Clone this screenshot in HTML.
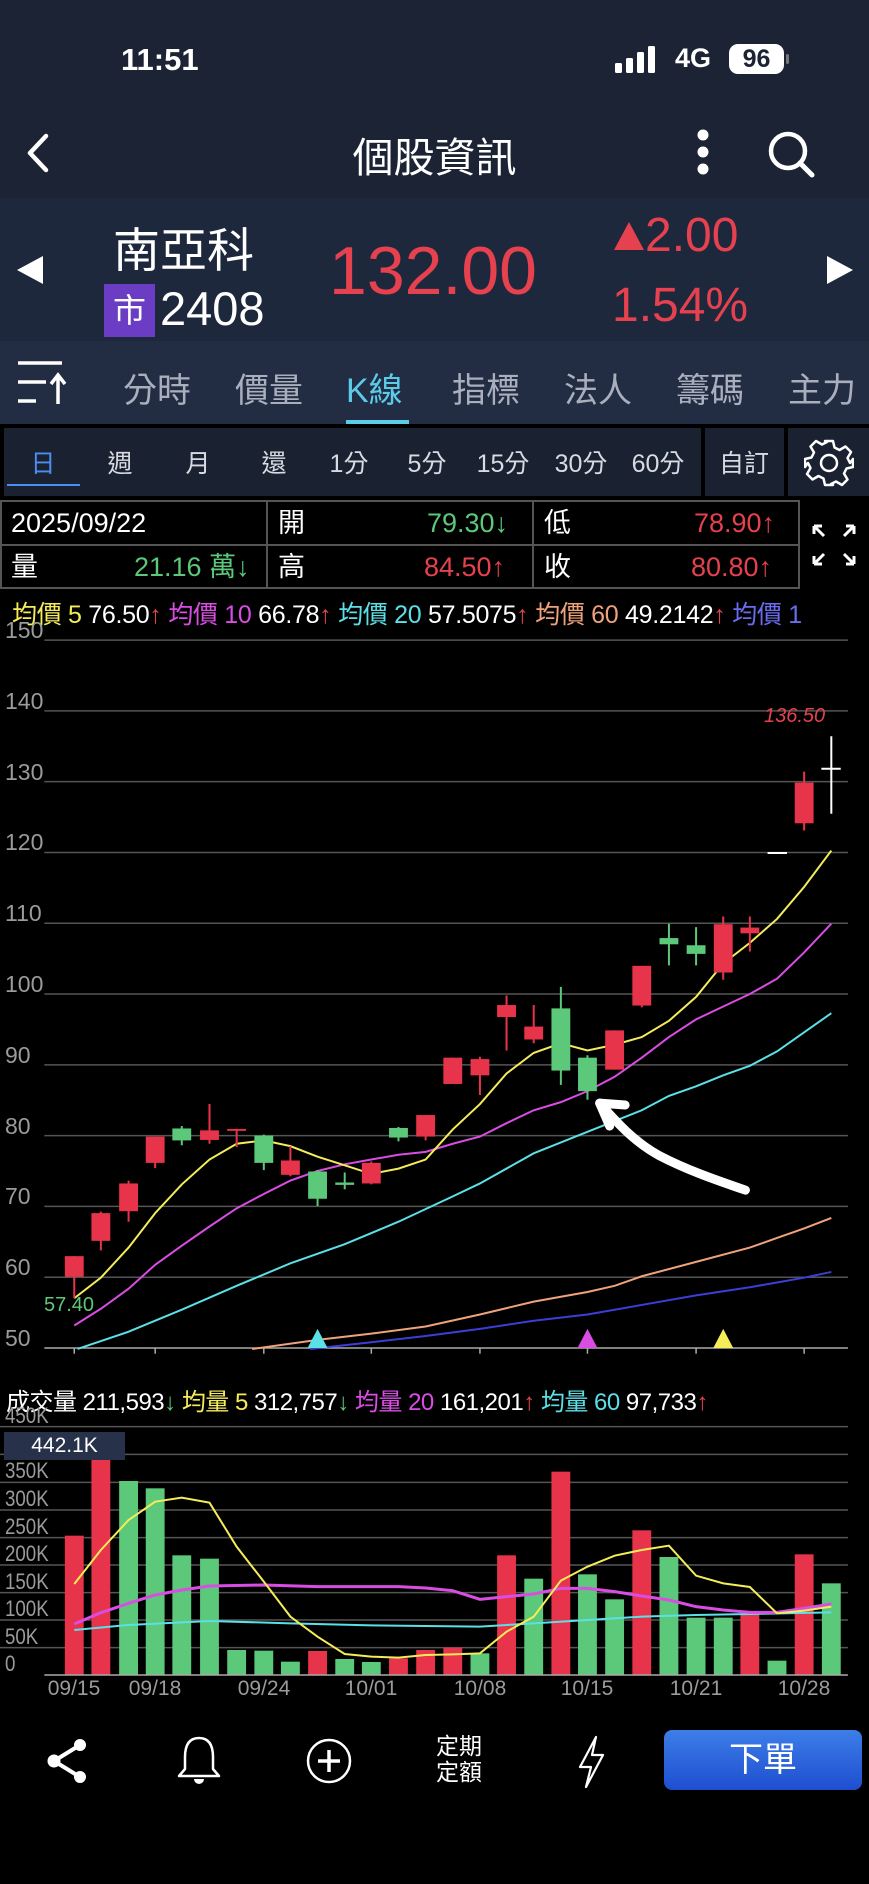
<!DOCTYPE html>
<html><head><meta charset="utf-8"><style>
*{margin:0;padding:0;box-sizing:border-box}
body{width:869px;height:1884px;background:#000;position:relative;overflow:hidden;font-family:"Liberation Sans","Noto Sans CJK TC",sans-serif;color:#fff}
.a{position:absolute;white-space:nowrap}
.tab{position:absolute;top:363px;font-size:34px;color:#a9afbc}
.per{position:absolute;top:444px;font-size:25px;color:#d8dbe2;transform:translateX(-50%)}
.pl{position:absolute;left:5px;font-size:23px;color:#9b9b9b;line-height:24px}
.vl{position:absolute;left:5px;font-size:22px;color:#9b9b9b;line-height:22px;transform:scaleX(.85);transform-origin:left}
.dt{position:absolute;top:1677px;font-size:21px;color:#9b9b9b;transform:translateX(-50%)}
.cell{position:absolute;font-size:27px;line-height:30px}
</style></head><body>
<div class="a" style="left:0;top:0;width:869px;height:198px;background:#1b2335"></div>
<div class="a" style="left:0;top:198px;width:869px;height:143px;background:#1e283c"></div>
<div class="a" style="left:0;top:341px;width:869px;height:83px;background:#222d44"></div>
<div class="a" style="left:121px;top:42px;font-size:31px;font-weight:600">11:51</div>
<svg class="a" style="left:615px;top:46px" width="48" height="28"><rect x="0" y="17" width="7" height="10" rx="1.5" fill="#fff"/><rect x="11" y="12" width="7" height="15" rx="1.5" fill="#fff"/><rect x="22" y="6" width="7" height="21" rx="1.5" fill="#fff"/><rect x="33" y="0" width="7" height="27" rx="1.5" fill="#fff"/></svg>
<div class="a" style="left:675px;top:43px;font-size:27px;font-weight:bold">4G</div>
<div class="a" style="left:729px;top:44px;width:55px;height:30px;background:#fff;border-radius:9px;color:#1b2335;font-size:25px;font-weight:bold;text-align:center;line-height:30px">96</div>
<div class="a" style="left:786px;top:54px;width:3px;height:10px;background:#777;border-radius:2px"></div>
<svg class="a" style="left:24px;top:133px" width="30" height="40"><path d="M22 3 L6 20 L22 37" stroke="#fff" stroke-width="4.5" fill="none" stroke-linecap="round" stroke-linejoin="round"/></svg>
<div class="a" style="left:0;width:869px;top:124px;text-align:center;font-size:41px">個股資訊</div>
<svg class="a" style="left:692px;top:128px" width="22" height="50"><circle cx="11" cy="7" r="5.5" fill="#fff"/><circle cx="11" cy="24" r="5.5" fill="#fff"/><circle cx="11" cy="41" r="5.5" fill="#fff"/></svg>
<svg class="a" style="left:766px;top:130px" width="52" height="50"><circle cx="22" cy="21" r="17" stroke="#fff" stroke-width="4.5" fill="none"/><path d="M34 33 L46 45" stroke="#fff" stroke-width="5" stroke-linecap="round"/></svg>
<svg class="a" style="left:15px;top:256px" width="30" height="28"><path d="M28 0 L28 28 L2 14Z" fill="#fff"/></svg>
<svg class="a" style="left:825px;top:256px" width="30" height="28"><path d="M2 0 L2 28 L28 14Z" fill="#fff"/></svg>
<div class="a" style="left:113px;top:212px;font-size:47px">南亞科</div>
<div class="a" style="left:104px;top:284px;width:51px;height:53px;background:#6a3dc4;font-size:33px;text-align:center;line-height:53px">市</div>
<div class="a" style="left:160px;top:281px;font-size:47px">2408</div>
<div class="a" style="left:329px;top:232px;font-size:68px;color:#e5414f">132.00</div>
<svg class="a" style="left:613px;top:221px" width="32" height="30"><path d="M16 1 L31 29 L1 29Z" fill="#e5414f"/></svg>
<div class="a" style="left:645px;top:208px;font-size:48px;color:#e5414f">2.00</div>
<div class="a" style="left:612px;top:278px;font-size:48px;color:#e5414f">1.54%</div>
<svg class="a" style="left:16px;top:360px" width="52" height="46"><path d="M2 3 H46 M2 22 H30 M2 41 H20" stroke="#fff" stroke-width="3.5"/><path d="M42 44 V16 M35 24 L42 15 L49 24" stroke="#fff" stroke-width="3.5" fill="none"/></svg>
<div class="tab" style="left:123px">分時</div>
<div class="tab" style="left:235px">價量</div>
<div class="tab" style="left:346px;color:#5ccbe8">K線</div>
<div class="tab" style="left:452px">指標</div>
<div class="tab" style="left:564px">法人</div>
<div class="tab" style="left:676px">籌碼</div>
<div class="tab" style="left:788px">主力</div>
<div class="a" style="left:346px;top:420px;width:63px;height:4px;background:#5ccbe8"></div>
<div class="a" style="left:4px;top:428px;width:697px;height:68px;background:#1a2130"></div>
<div class="a" style="left:705px;top:428px;width:79px;height:68px;background:#1a2130"></div>
<div class="a" style="left:788px;top:428px;width:81px;height:68px;background:#1a2130"></div>
<div class="per" style="left:43px;color:#4a8ff0">日</div>
<div class="per" style="left:120px">週</div>
<div class="per" style="left:198px">月</div>
<div class="per" style="left:274px">還</div>
<div class="per" style="left:349px">1分</div>
<div class="per" style="left:427px">5分</div>
<div class="per" style="left:503px">15分</div>
<div class="per" style="left:581px">30分</div>
<div class="per" style="left:658px">60分</div>
<div class="per" style="left:744px">自訂</div>
<div class="a" style="left:7px;top:484px;width:73px;height:2px;background:#4a8ff0"></div>
<svg class="a" style="left:804px;top:438px" width="50" height="50" viewBox="0 0 50 50"><path d="M21 3h8l1.5 6.5 5 2.5 6-3.5 5.5 5.5-3.5 6 2.5 5L49 21v8l-6.5 1.5-2.5 5 3.5 6-5.5 5.5-6-3.5-5 2.5L29 47h-8l-1.5-6.5-5-2.5-6 3.5-5.5-5.5 3.5-6-2.5-5L1 29v-8l6.5-1.5 2.5-5-3.5-6 5.5-5.5 6 3.5 5-2.5z" fill="none" stroke="#fff" stroke-width="2.5" stroke-linejoin="round"/><circle cx="25" cy="25" r="8" fill="none" stroke="#fff" stroke-width="2.5"/></svg>
<svg class="a" style="left:0;top:500px" width="869" height="90"><g stroke="#555" stroke-width="2" fill="none"><rect x="1" y="1" width="798" height="87"/><path d="M1 45 H799 M267 1 V88 M533 1 V88"/></g></svg>
<div class="cell" style="left:11px;top:508px">2025/09/22</div>
<div class="cell" style="left:278px;top:508px">開</div>
<div class="cell" style="left:427px;top:508px;color:#5cc87a">79.30↓</div>
<div class="cell" style="left:544px;top:508px">低</div>
<div class="cell" style="left:694px;top:508px;color:#e5414f">78.90↑</div>
<div class="cell" style="left:11px;top:552px">量</div>
<div class="cell" style="left:134px;top:552px;color:#5cc87a">21.16 萬↓</div>
<div class="cell" style="left:278px;top:552px">高</div>
<div class="cell" style="left:424px;top:552px;color:#e5414f">84.50↑</div>
<div class="cell" style="left:544px;top:552px">收</div>
<div class="cell" style="left:691px;top:552px;color:#e5414f">80.80↑</div>
<svg class="a" style="left:810px;top:522px" width="48" height="46"><g stroke="#fff" stroke-width="3" fill="none"><path d="M4 4 L14 14 M4 4 H12 M4 4 V12"/><path d="M44 4 L34 14 M44 4 H36 M44 4 V12"/><path d="M4 42 L14 32 M4 42 H12 M4 42 V34"/><path d="M44 42 L34 32 M44 42 H36 M44 42 V34"/></g></svg>
<div class="a" style="left:12px;top:595px;font-size:25px;letter-spacing:-0.3px"><span style="color:#f5ec5a">均價 5</span> 76.50<span style="color:#e5414f">↑</span> <span style="color:#d94de3">均價 10</span> 66.78<span style="color:#e5414f">↑</span> <span style="color:#5be0e8">均價 20</span> 57.5075<span style="color:#e5414f">↑</span> <span style="color:#f0a27a">均價 60</span> 49.2142<span style="color:#e5414f">↑</span> <span style="color:#6a6cf0">均價 1</span></div>
<div class="pl" style="top:618px">150</div><div class="pl" style="top:689px">140</div><div class="pl" style="top:760px">130</div><div class="pl" style="top:830px">120</div><div class="pl" style="top:901px">110</div><div class="pl" style="top:972px">100</div><div class="pl" style="top:1043px">90</div><div class="pl" style="top:1114px">80</div><div class="pl" style="top:1184px">70</div><div class="pl" style="top:1255px">60</div><div class="pl" style="top:1326px">50</div>
<svg class="a" style="left:0;top:620px" width="869" height="750" viewBox="0 0 1568 1568" preserveAspectRatio="none">
<g stroke="#555" stroke-width="1.5">
<path d="M80 42H1530M80 190H1530M80 338H1530M80 486H1530M80 634H1530M80 782H1530M80 930H1530M80 1078H1530M80 1226H1530M80 1374H1530" vector-effect="non-scaling-stroke"/>
<path d="M80 1522H1530" stroke="#aaa" vector-effect="non-scaling-stroke"/>
<path d="M134 1522V1534M280 1522V1534M476 1522V1534M670 1522V1534M866 1522V1534M1060 1522V1534M1256 1522V1534M1451 1522V1534" stroke="#aaa" vector-effect="non-scaling-stroke"/>
</g>
<g stroke-width="2" fill="none">
<polyline vector-effect="non-scaling-stroke" stroke="#3d3dd8" points="560,1524 670,1510 768,1497 866,1482 963,1465 1060,1452 1158,1432 1256,1412 1353,1395 1402,1385 1451,1375 1500,1363"/>
<polyline vector-effect="non-scaling-stroke" stroke="#f0a27a" points="455,1524 573,1505 670,1492 768,1477 866,1452 963,1425 1060,1405 1109,1392 1158,1372 1256,1342 1353,1312 1402,1292 1451,1272 1500,1250"/>
<polyline vector-effect="non-scaling-stroke" stroke="#5be0e8" points="140,1524 232,1488 328,1442 427,1392 524,1345 622,1305 719,1258 817,1205 866,1178 963,1115 1060,1070 1158,1025 1207,995 1256,975 1305,952 1353,932 1402,902 1451,862 1500,822"/>
<polyline vector-effect="non-scaling-stroke" stroke="#d94de3" points="134,1475 182,1440 232,1398 280,1348 328,1308 378,1268 427,1230 476,1200 524,1172 573,1152 622,1138 670,1128 719,1118 768,1112 817,1095 866,1080 914,1052 963,1025 1012,1008 1060,985 1109,955 1158,915 1207,872 1256,835 1305,808 1353,782 1402,750 1451,695 1500,635"/>
<polyline vector-effect="non-scaling-stroke" stroke="#f5ec5a" points="134,1418 182,1375 232,1312 280,1240 328,1180 378,1128 427,1095 476,1088 524,1100 573,1122 622,1140 670,1158 719,1147 768,1128 817,1065 866,1012 914,948 963,905 1012,885 1060,900 1109,888 1158,872 1207,838 1256,788 1305,718 1353,675 1402,625 1451,558 1500,482"/>
</g>
<g stroke="#e8344a" stroke-width="2">
<path vector-effect="non-scaling-stroke" d="M134 1330V1418M182 1237V1318M232 1172V1258M280 1080V1146M378 1012V1095M427 1064V1102M524 1100V1163M670 1132V1180M768 1035V1088M817 915V970M866 913V993M914 785V900M963 805V885M1109 858V940M1158 723V810M1305 620V752M1353 620V693M1451 317V440"/>
</g>
<g fill="#e8344a">
<rect x="117" y="1330" width="34" height="43"/><rect x="165" y="1240" width="34" height="58"/><rect x="215" y="1178" width="34" height="58"/><rect x="263" y="1080" width="34" height="55"/><rect x="361" y="1067" width="34" height="20"/><rect x="410" y="1064" width="34" height="4"/><rect x="507" y="1130" width="34" height="30"/><rect x="653" y="1135" width="34" height="43"/><rect x="751" y="1035" width="34" height="45"/><rect x="800" y="915" width="34" height="55"/><rect x="849" y="918" width="34" height="34"/><rect x="897" y="805" width="34" height="25"/><rect x="946" y="850" width="34" height="27"/><rect x="1092" y="858" width="34" height="82"/><rect x="1141" y="723" width="34" height="83"/><rect x="1288" y="636" width="34" height="101"/><rect x="1336" y="643" width="34" height="12"/><rect x="1434" y="340" width="34" height="85"/>
</g>
<g stroke="#5cc87a" stroke-width="2">
<path vector-effect="non-scaling-stroke" d="M328 1058V1098M476 1076V1150M573 1150V1225M622 1155V1190M719 1060V1090M1012 767V972M1060 910V1003M1207 635V722M1256 642V722"/>
</g>
<g fill="#5cc87a">
<rect x="311" y="1063" width="34" height="25"/><rect x="459" y="1078" width="34" height="57"/><rect x="556" y="1153" width="34" height="57"/><rect x="605" y="1176" width="34" height="5"/><rect x="702" y="1062" width="34" height="20"/><rect x="995" y="812" width="34" height="130"/><rect x="1043" y="915" width="34" height="70"/><rect x="1190" y="665" width="34" height="13"/><rect x="1239" y="680" width="34" height="18"/>
</g>
<g stroke="#fff" stroke-width="2">
<path vector-effect="non-scaling-stroke" d="M1385 487H1420M1500 243V405M1482 311H1517"/>
</g>
<path d="M555 1522L573 1482L591 1522Z" fill="#5be0e8"/>
<path d="M1042 1522L1060 1482L1078 1522Z" fill="#d94de3"/>
<path d="M1287 1522L1305 1482L1323 1522Z" fill="#f5ec5a"/>
<g stroke="#fff" stroke-width="9" fill="none" stroke-linecap="round" stroke-linejoin="round">
<path vector-effect="non-scaling-stroke" d="M1345 1192 C1290 1170 1240 1150 1190 1120 C1150 1095 1120 1060 1082 1010"/>
<path vector-effect="non-scaling-stroke" d="M1082 1010 L1128 1014 M1082 1010 L1100 1058"/>
</g>
</svg>
<div class="a" style="left:44px;top:1294px;font-size:20px;color:#5cc87a">57.40</div>
<div class="a" style="left:764px;top:705px;font-size:20px;color:#e5414f;font-style:italic">136.50</div>
<div class="a" style="left:6px;top:1382px;font-size:24px;letter-spacing:-0.5px">成交量 211,593<span style="color:#5cc87a">↓</span> <span style="color:#f5ec5a">均量 5</span> 312,757<span style="color:#5cc87a">↓</span> <span style="color:#d94de3">均量 20</span> 161,201<span style="color:#e5414f">↑</span> <span style="color:#5be0e8">均量 60</span> 97,733<span style="color:#e5414f">↑</span></div>
<svg class="a" style="left:0;top:1370px" width="869" height="514" viewBox="0 0 1568 1542" preserveAspectRatio="none">
<path vector-effect="non-scaling-stroke" stroke="#555" stroke-width="1.5" d="M0 170H1530M0 253H1530M0 337H1530M0 420H1530M0 503H1530M0 585H1530M0 668H1530M0 750H1530M0 833H1530"/>
<g fill="#e8344a"><rect x="117" y="497" width="34" height="418"/><rect x="165" y="268" width="34" height="647"/><rect x="556" y="843" width="34" height="72"/><rect x="702" y="865" width="34" height="50"/><rect x="751" y="840" width="34" height="75"/><rect x="800" y="833" width="34" height="82"/><rect x="897" y="556" width="34" height="359"/><rect x="995" y="305" width="34" height="610"/><rect x="1141" y="481" width="34" height="434"/><rect x="1336" y="733" width="34" height="182"/><rect x="1434" y="553" width="34" height="362"/></g>
<g fill="#5cc87a"><rect x="215" y="333" width="34" height="582"/><rect x="263" y="355" width="34" height="560"/><rect x="311" y="556" width="34" height="359"/><rect x="361" y="566" width="34" height="349"/><rect x="410" y="840" width="34" height="75"/><rect x="459" y="842" width="34" height="73"/><rect x="507" y="875" width="34" height="40"/><rect x="605" y="867" width="34" height="48"/><rect x="653" y="876" width="34" height="39"/><rect x="849" y="850" width="34" height="65"/><rect x="946" y="626" width="34" height="289"/><rect x="1043" y="613" width="34" height="302"/><rect x="1092" y="688" width="34" height="227"/><rect x="1190" y="561" width="34" height="354"/><rect x="1239" y="743" width="34" height="172"/><rect x="1288" y="743" width="34" height="172"/><rect x="1385" y="872" width="34" height="43"/><rect x="1483" y="640" width="34" height="275"/></g>
<path vector-effect="non-scaling-stroke" stroke="#aaa" stroke-width="1.5" d="M80 915H1530"/>
<g fill="none" stroke-width="2">
<polyline vector-effect="non-scaling-stroke" stroke="#5be0e8" points="134,780 232,765 378,753 524,760 670,766 866,770 963,760 1060,750 1158,740 1256,735 1353,732 1500,727"/>
<polyline vector-effect="non-scaling-stroke" stroke="#d94de3" stroke-width="3" points="134,762 182,728 232,700 280,675 328,660 378,648 476,645 573,650 719,650 768,654 817,662 866,688 914,680 963,672 1012,655 1060,655 1109,665 1158,678 1207,690 1256,710 1305,720 1353,727 1402,727 1451,715 1500,702"/>
<polyline vector-effect="non-scaling-stroke" stroke="#f5ec5a" points="134,642 182,540 232,450 280,395 328,383 378,398 427,530 476,635 524,740 573,800 622,852 670,860 719,863 768,855 817,853 866,850 914,785 963,740 1012,632 1060,590 1109,557 1158,540 1207,527 1256,617 1305,640 1353,651 1402,730 1451,722 1500,710"/>
</g>
</svg>
<div class="vl" style="top:1405px">450K</div>
<div class="a" style="left:4px;top:1432px;width:121px;height:28px;background:#27324a;font-size:21px;text-align:center;line-height:28px">442.1K</div>
<div class="vl" style="top:1460px">350K</div><div class="vl" style="top:1488px">300K</div><div class="vl" style="top:1516px">250K</div><div class="vl" style="top:1543px">200K</div><div class="vl" style="top:1571px">150K</div><div class="vl" style="top:1598px">100K</div><div class="vl" style="top:1626px">50K</div><div class="vl" style="top:1653px">0</div>
<div class="dt" style="left:74px">09/15</div><div class="dt" style="left:155px">09/18</div><div class="dt" style="left:264px">09/24</div><div class="dt" style="left:371px">10/01</div><div class="dt" style="left:480px">10/08</div><div class="dt" style="left:587px">10/15</div><div class="dt" style="left:696px">10/21</div><div class="dt" style="left:804px">10/28</div>
<svg class="a" style="left:44px;top:1737px" width="46" height="48"><g stroke="#fff" stroke-width="4"><path d="M36 8 L10 24 L36 40"/></g><circle cx="36" cy="8" r="6" fill="#fff"/><circle cx="10" cy="24" r="6.5" fill="#fff"/><circle cx="36" cy="40" r="6" fill="#fff"/></svg>
<svg class="a" style="left:174px;top:1735px" width="50" height="52"><path d="M25 3 C14 3 11 12 11 22 V34 L5 41 H45 L39 34 V22 C39 12 36 3 25 3Z" fill="none" stroke="#fff" stroke-width="2.5" stroke-linejoin="round"/><path d="M20 44 A5 5 0 0 0 30 44Z" fill="#fff"/></svg>
<svg class="a" style="left:305px;top:1737px" width="48" height="48"><circle cx="24" cy="24" r="21" fill="none" stroke="#fff" stroke-width="2.5"/><path d="M24 13V35M13 24H35" stroke="#fff" stroke-width="3.5"/></svg>
<div class="a" style="left:436px;top:1733px;font-size:23px;line-height:26px;text-align:center">定期<br>定額</div>
<svg class="a" style="left:574px;top:1735px" width="34" height="54"><path d="M22 2 L6 32 H17 L12 52 L29 20 H18 Z" fill="none" stroke="#fff" stroke-width="2.2" stroke-linejoin="round"/></svg>
<div class="a" style="left:664px;top:1730px;width:198px;height:60px;border-radius:8px;background:linear-gradient(#3d7ee8,#1e4ed0);font-size:34px;text-align:center;line-height:60px">下單</div>
</body></html>
